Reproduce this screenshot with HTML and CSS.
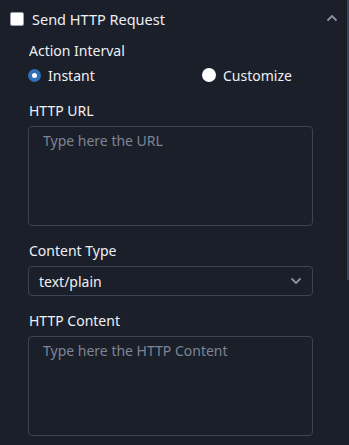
FILE: index.html
```html
<!DOCTYPE html>
<html lang="en">
<head>
    <meta charset="UTF-8">
    <meta name="viewport" content="width=device-width, initial-scale=1.0">
    <title>Send HTTP Request</title>
    <link rel="stylesheet" href="styles.css">
</head>
<body>
    <div class="panel">
        <div class="panel-header">
            <label class="check">
                <span class="check-box"></span>
                <span>Send HTTP Request</span>
            </label>
            <svg class="collapse" width="12" height="8" viewBox="0 0 12 8">
                <path d="M1.5 6.5 L6 2 L10.5 6.5" fill="none" stroke="#8c93a3" stroke-width="1.8"/>
            </svg>
        </div>

        <div class="panel-body">
            <div class="field interval">
                <div class="label">Action Interval</div>
                <div class="radios">
                    <label class="radio">
                        <span class="radio-dot checked"></span>
                        <span>Instant</span>
                    </label>
                    <label class="radio">
                        <span class="radio-dot"></span>
                        <span>Customize</span>
                    </label>
                </div>
            </div>

            <div class="field">
                <div class="label">HTTP URL</div>
                <textarea class="text-box" placeholder="Type here the URL"></textarea>
            </div>

            <div class="field">
                <div class="label">Content Type</div>
                <div class="select">
                    <span>text/plain</span>
                    <svg width="12" height="8" viewBox="0 0 12 8">
                        <path d="M1.5 1.5 L6 6 L10.5 1.5" fill="none" stroke="#8c93a3" stroke-width="1.8"/>
                    </svg>
                </div>
            </div>

            <div class="field">
                <div class="label">HTTP Content</div>
                <textarea class="text-box" placeholder="Type here the HTTP Content"></textarea>
            </div>
        </div>
    </div>
    <div class="scrollbar"></div>
</body>
</html>
```

FILE: styles.css
```css
body {
    margin: 0;
    background-color: #1b1f2a;
    color: #eef0f4;
    font-family: "Noto Sans", "Open Sans", sans-serif;
    font-size: 14px;
    height: 445px;
    overflow: hidden;
    position: relative;
}
.panel {
    width: 349px;
}
.panel-header {
    display: flex;
    align-items: center;
    justify-content: space-between;
    height: 20px;
    padding: 9px 11px 0 10px;
}
.check {
    display: flex;
    align-items: center;
    gap: 8px;
    font-size: 14.5px;
}
.check-box {
    width: 12px;
    height: 12px;
    background-color: #fff;
    border: 1px solid #9aa0ac;
    border-radius: 2px;
}
.collapse {
    margin-top: -2px;
}
.panel-body {
    padding: 0 37px 0 28px;
}
.field {
    margin-top: 15px;
}
.field.interval {
    margin-top: 12px;
}
.label {
    line-height: 20px;
    margin-bottom: 5px;
    padding-left: 1px;
}
.interval .label {
    margin-bottom: 0;
}
.radios {
    display: grid;
    grid-template-columns: 174px 1fr;
    height: 22px;
    margin-top: 3px;
}
.radio {
    display: flex;
    align-items: center;
    gap: 7px;
}
.radio-dot {
    width: 14px;
    height: 14px;
    border-radius: 50%;
    background-color: #fff;
    box-sizing: border-box;
}
.radio-dot.checked {
    background-color: #fff;
    border: 4px solid #2f6fb7;
    width: 13px;
    height: 13px;
}
.text-box {
    display: block;
    width: 285px;
    height: 100px;
    box-sizing: border-box;
    margin: 0;
    padding: 4px 14px;
    resize: none;
    background-color: #1b1f2a;
    border: 1px solid #3c4354;
    border-radius: 4px;
    color: #eef0f4;
    font-family: "Noto Sans", "Open Sans", sans-serif;
    font-size: 14px;
    line-height: 20px;
    outline: none;
}
.text-box::placeholder {
    color: #7d8593;
}
.select {
    display: flex;
    align-items: center;
    justify-content: space-between;
    width: 285px;
    height: 30px;
    box-sizing: border-box;
    padding: 0 10px 0 10px;
    border: 1px solid #3c4354;
    border-radius: 4px;
}
.scrollbar {
    position: absolute;
    top: 0;
    right: 0;
    width: 2px;
    height: 280px;
    background-color: #3a4256;
}
```
